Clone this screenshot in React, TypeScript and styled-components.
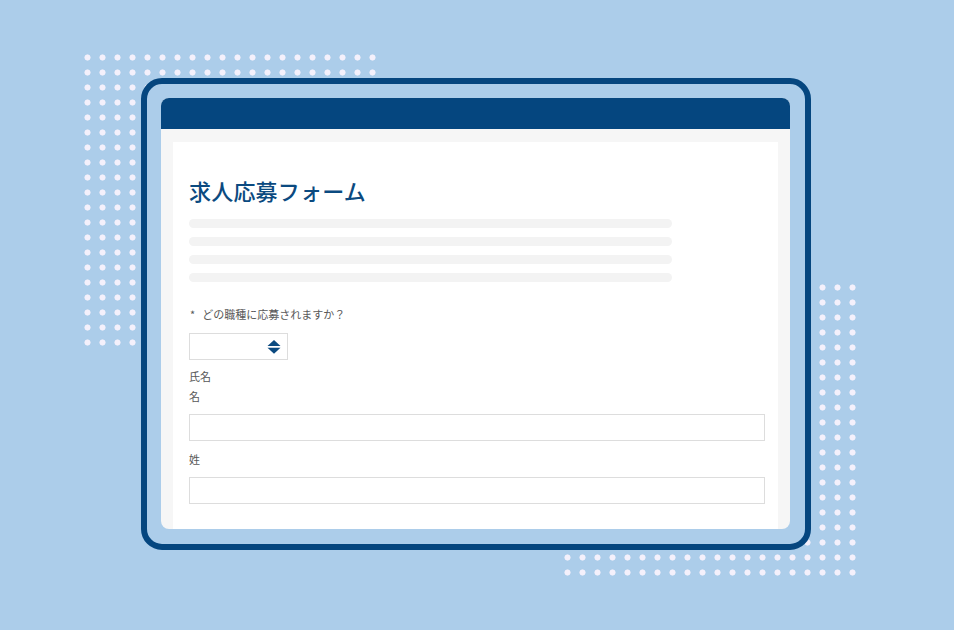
import React from "react";
import styled, { createGlobalStyle } from "styled-components";

const Global = createGlobalStyle`
  html, body { margin: 0; padding: 0; }
  body {
    background: #accdea;
    font-family: "Noto Sans CJK JP", "Noto Sans", "Liberation Sans", sans-serif;
  }
`;

const Stage = styled.div`
  position: relative;
  width: 954px;
  height: 630px;
  display: flex;
  align-items: center;
  justify-content: center;
  overflow: hidden;
`;

const DotField = styled.div<{ $x: number; $y: number }>`
  position: absolute;
  left: ${(p) => p.$x}px;
  top: ${(p) => p.$y}px;
  width: 300px;
  height: 300px;
  background-image: radial-gradient(circle at 7.5px 7.5px, #f4f0fb 2.7px, rgba(244, 240, 251, 0) 3.4px);
  background-size: 15px 15px;
  z-index: 0;
`;

const Frame = styled.div`
  position: relative;
  z-index: 1;
  box-sizing: border-box;
  width: 670px;
  height: 472px;
  margin-left: -2px;
  margin-top: -2px;
  border: 6px solid #05467f;
  border-radius: 21px;
  background: #accdea;
  padding: 14px 15px 15px 14px;
  display: flex;
`;

const Card = styled.div`
  flex: 1;
  display: flex;
  flex-direction: column;
  border-radius: 8px;
  overflow: hidden;
  background: #f6f6f6;
`;

const Header = styled.div`
  height: 31px;
  flex: none;
  background: #05467f;
`;

const Body = styled.div`
  flex: 1;
  display: flex;
  padding: 13px 12px 0;
  min-height: 0;
`;

const Sheet = styled.div`
  flex: 1;
  background: #ffffff;
  padding: 33px 13px 0 16px;
  display: flex;
  flex-direction: column;
  overflow: hidden;
`;

const Title = styled.h1`
  margin: 0;
  font-size: 22px;
  line-height: 30px;
  font-weight: 500;
  color: #0b4a80;
  letter-spacing: 0.2px;
`;

const Lines = styled.div`
  margin-top: 14px;
  display: flex;
  flex-direction: column;
  gap: 9px;
`;

const Line = styled.div`
  width: 483px;
  height: 9px;
  border-radius: 5px;
  background: #f3f3f3;
`;

const Label = styled.div<{ $mt: number }>`
  margin-top: ${(p) => p.$mt}px;
  font-size: 11px;
  line-height: 16px;
  color: #585858;
`;

const Star = styled.span`
  margin-left: 1px;
  margin-right: 7px;
`;

const Select = styled.div`
  margin-top: 11px;
  box-sizing: border-box;
  width: 99px;
  height: 27px;
  border: 1px solid #dddddd;
  display: flex;
  align-items: center;
  justify-content: flex-end;
  padding-right: 6px;
`;

const Input = styled.div`
  margin-top: 10px;
  box-sizing: border-box;
  width: 576px;
  height: 27px;
  flex: none;
  border: 1px solid #dddddd;
  background: #fff;
`;

const SortIcon = () => (
  <svg width="14" height="16" viewBox="0 0 14 16">
    <path d="M7 1 L13.5 7 L0.5 7 Z" fill="#0b4a80" />
    <path d="M0.5 8.8 L13.5 8.8 L7 14.8 Z" fill="#0b4a80" />
  </svg>
);

export default function App() {
  return (
    <>
      <Global />
      <Stage>
        <DotField $x={79.5} $y={49.5} />
        <DotField $x={559.5} $y={280} />
        <Frame>
          <Card>
            <Header />
            <Body>
              <Sheet>
                <Title>求人応募フォーム</Title>
                <Lines>
                  <Line />
                  <Line />
                  <Line />
                  <Line />
                </Lines>
                <Label $mt={24}>
                  <Star>*</Star>どの職種に応募されますか？
                </Label>
                <Select>
                  <SortIcon />
                </Select>
                <Label $mt={8}>氏名</Label>
                <Label $mt={4}>名</Label>
                <Input />
                <Label $mt={10}>姓</Label>
                <Input />
              </Sheet>
            </Body>
          </Card>
        </Frame>
      </Stage>
    </>
  );
}
